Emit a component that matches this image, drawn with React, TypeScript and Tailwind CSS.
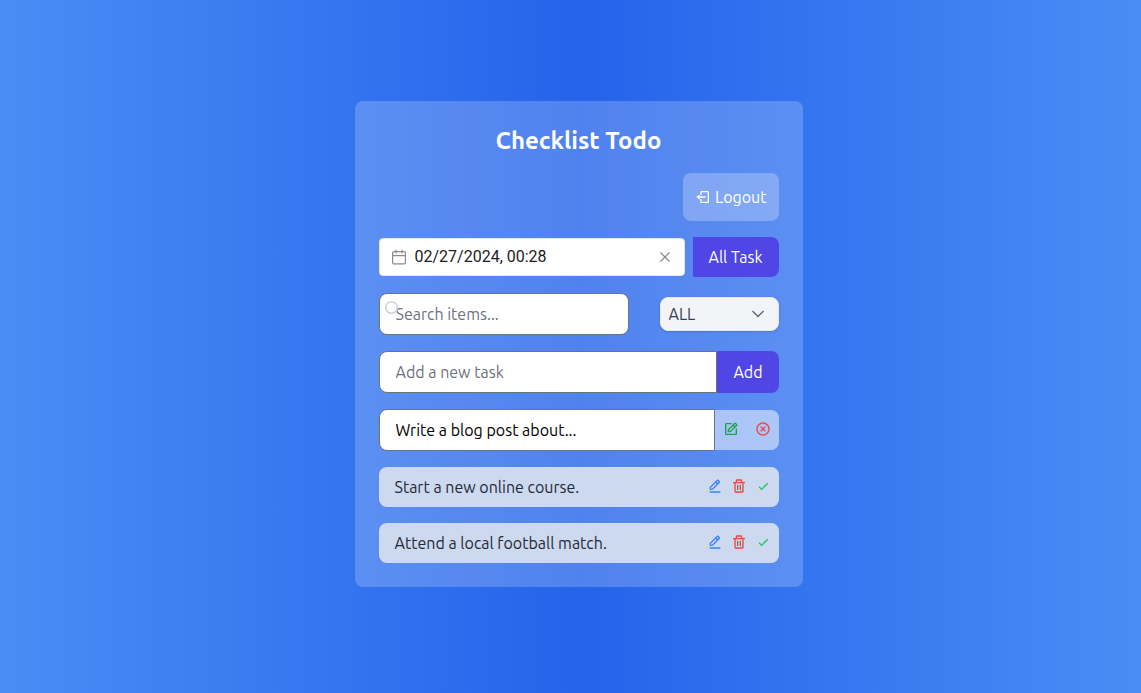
import type { ReactNode } from "react";
import { BiCheck, BiEdit, BiEditAlt, BiTrash, BiXCircle } from "react-icons/bi";
import { ChevronDown } from "lucide-react";

const tasks = ["Start a new online course.", "Attend a local football match."];

function IconButton({ label, className, children }: { label: string; className: string; children: ReactNode }) {
  return (
    <button type="button" aria-label={label} className={className}>
      {children}
    </button>
  );
}

function LogoutIcon() {
  return (
    <svg width="16" height="16" viewBox="0 0 24 24" fill="currentColor" aria-hidden="true">
      <path d="m2 12 5 4v-3h9v-2H7V8z" />
      <path d="M19 3h-9c-1.103 0-2 .897-2 2v4h2V5h9v14h-9v-4H8v4c0 1.103.897 2 2 2h9c1.103 0 2-.897 2-2V5c0-1.103-.897-2-2-2z" />
    </svg>
  );
}

function CalendarIcon() {
  return (
    <svg width="16" height="16" viewBox="0 0 16 16" fill="none" stroke="currentColor" strokeWidth="1.2" aria-hidden="true">
      <rect x="1.6" y="2.6" width="12.8" height="12.3" rx="1.2" />
      <path d="M1.6 6.6H14.4M5 .8V4.4M11 .8V4.4" />
    </svg>
  );
}

function ClearIcon() {
  return (
    <svg width="16" height="16" viewBox="0 0 16 16" fill="none" stroke="currentColor" strokeWidth="1.3" aria-hidden="true">
      <path d="M3.5 3.5L12.5 12.5M12.5 3.5L3.5 12.5" />
    </svg>
  );
}

export default function App() {
  return (
    <main className="flex min-h-screen items-center justify-center bg-[linear-gradient(to_right,#4a8df5,#2563eb_51%,#4a8df5)] pb-1.5 pl-4 font-['Ubuntu','Noto_Sans',sans-serif] text-base">
      <div className="w-full max-w-md rounded-lg bg-white/20 p-6">
        <h1 className="mb-4 text-center text-2xl font-bold text-white">Checklist Todo</h1>
        <div className="mb-4 flex justify-end">
          <button type="button" className="flex h-12 items-center gap-1 rounded-lg bg-white/25 px-3 text-white">
            <LogoutIcon />
            Logout
          </button>
        </div>
        <div className="mb-4 flex items-center gap-2">
          <div className="flex h-[38px] min-w-0 flex-1 items-center gap-2 rounded border border-gray-200 bg-white px-[11px] text-[#8c8c8c]">
            <CalendarIcon />
            <input aria-label="Date and time" defaultValue="02/27/2024, 00:28" className="min-w-0 flex-1 font-[Roboto,sans-serif] text-[#212121] outline-none" />
            <IconButton label="Clear date" className="text-[#8c8c8c]"><ClearIcon /></IconButton>
          </div>
          <button type="button" className="rounded-r-lg bg-[#4f46e5] px-4 py-2 text-white">All Task</button>
        </div>
        <div className="mb-4 flex items-center justify-between">
          <div className="relative">
            <input aria-label="Search items" placeholder="Search items..." className="block h-[42px] w-[250px] rounded-lg border border-[#6b7280] bg-white px-4 placeholder:text-[#6b7280]" />
            <svg className="pointer-events-none absolute top-1.5 left-1 text-[#d1d5db]" width="18" height="18" viewBox="0 0 18 18" fill="none" stroke="currentColor" strokeWidth="1.6" aria-hidden="true">
              <circle cx="8.5" cy="8.5" r="5.8" />
            </svg>
          </div>
          <div className="relative">
            <select aria-label="Filter" className="block h-[34px] w-[119px] appearance-none rounded-lg border border-gray-200 bg-[#f3f4f6] px-2 text-[#374151] shadow-sm">
              <option>ALL</option>
            </select>
            <ChevronDown className="pointer-events-none absolute top-[7px] right-[11px] size-5 text-[#6b7280]" />
          </div>
        </div>
        <div className="mb-4 flex">
          <input aria-label="New task" placeholder="Add a new task" className="h-[42px] min-w-0 flex-1 rounded-l-lg border border-[#6b7280] bg-white px-4 placeholder:text-[#6b7280]" />
          <button type="button" className="rounded-r-lg bg-[#4f46e5] px-4 text-white">Add</button>
        </div>
        <div className="mb-4 flex items-center">
          <input aria-label="Edit task" defaultValue="Write a blog post about..." className="h-[42px] min-w-0 flex-1 rounded-l-lg border border-[#6b7280] bg-white px-4 text-black" />
          <div className="flex h-10 w-16 items-center justify-between rounded-r-lg bg-white/50 px-2 pb-0.5">
            <IconButton label="Save" className="text-[#16a34a]"><BiEdit className="size-4" /></IconButton>
            <IconButton label="Cancel" className="text-[#ef4444]"><BiXCircle className="size-4" /></IconButton>
          </div>
        </div>
        <ul className="flex flex-col gap-4">
          {tasks.map((task) => (
            <li key={task} className="flex h-10 items-center justify-between rounded-lg bg-[#cdd9ef] pr-2 pl-4 text-[#1f2937]">
              <span>{task}</span>
              <div className="flex gap-2 pb-0.5">
                <IconButton label="Edit" className="text-[#3b82f6]"><BiEditAlt className="size-4" /></IconButton>
                <IconButton label="Delete" className="text-[#ef4444]"><BiTrash className="size-4" /></IconButton>
                <IconButton label="Complete" className="text-[#22c55e]"><BiCheck className="size-4" /></IconButton>
              </div>
            </li>
          ))}
        </ul>
      </div>
    </main>
  );
}
